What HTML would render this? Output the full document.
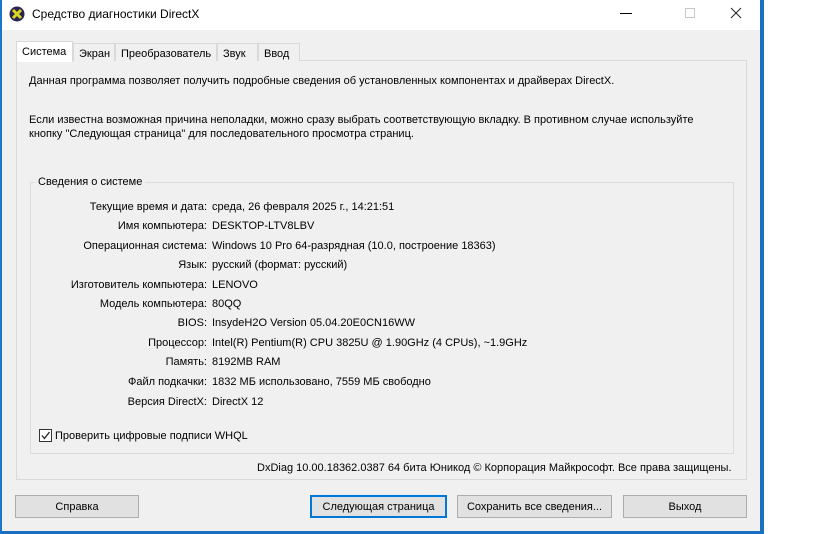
<!DOCTYPE html>
<html><head><meta charset="utf-8"><style>
*{margin:0;padding:0;box-sizing:border-box}
body{width:819px;height:534px;background:#fff;position:relative;overflow:hidden;font-family:"Liberation Sans",sans-serif;font-size:11px;color:#000}
.a{position:absolute}
.win{left:0;top:0;width:764px;height:534px;background:#f0f0f0;border-left:2px solid #1a78c8;border-right:4px solid #1a6fc0;border-bottom:3px solid #1a6fc0}
.title{left:2px;top:0;width:758px;height:30px;background:#fff}
.tab{top:43px;height:18px;border:1px solid #d9d9d9;border-bottom:none;background:#f0f0f0;padding:4px 5px 0;font-size:11px}
.panel{left:16px;top:60px;width:731px;height:420px;border:1px solid #d9d9d9;background:#f0f0f0}
.grp{left:30px;top:182px;width:704px;height:272px;border:1px solid #dcdcdc}
.lbl{width:207px;text-align:right;left:0}
.val{left:212px}
.btn{top:495px;height:23px;border:1px solid #adadad;background:#e1e1e1;text-align:center;line-height:22px}
</style></head><body>
<div class="a win"></div>
<div class="a title"></div>
<svg class="a" style="left:9px;top:6px" width="16" height="16" viewBox="0 0 16 16"><circle cx="8" cy="8" r="7.5" fill="#2a2550"/><path d="M4 4L12 12M12 4L4 12" stroke="#d8d820" stroke-width="3"/></svg>
<div class="a" style="left:32px;top:7px;font-size:12px">Средство диагностики DirectX</div>
<div class="a" style="left:620px;top:13px;width:12px;height:1px;background:#000"></div>
<div class="a" style="left:685px;top:8px;width:10px;height:10px;border:1px solid #c8c8c8"></div>
<svg class="a" style="left:730px;top:7px" width="12" height="12"><path d="M1 1L11 11M11 1L1 11" stroke="#222" stroke-width="1"/></svg>
<div class="a panel"></div>
<div class="a tab" style="left:16px;top:41px;height:21px;background:#fff;width:57px;padding-top:4px">Система</div>
<div class="a tab" style="left:73px;width:42px">Экран</div>
<div class="a tab" style="left:115px;width:102px">Преобразователь</div>
<div class="a tab" style="left:217px;width:41px">Звук</div>
<div class="a tab" style="left:258px;width:42px">Ввод</div>
<div class="a" style="left:29px;top:75px">Данная программа позволяет получить подробные сведения об установленных компонентах и драйверах DirectX.</div>
<div class="a" style="left:29px;top:113px;line-height:14px">Если известна возможная причина неполадки, можно сразу выбрать соответствующую вкладку. В противном случае используйте<br>кнопку "Следующая страница" для последовательного просмотра страниц.</div>
<div class="a grp"></div>
<div class="a" style="left:35px;top:176px;background:#f0f0f0;padding:0 3px">Сведения о системе</div>
<div class="a lbl" style="top:201px">Текущие время и дата:</div><div class="a val" style="top:201px">среда, 26 февраля 2025 г., 14:21:51</div>
<div class="a lbl" style="top:220px">Имя компьютера:</div><div class="a val" style="top:220px">DESKTOP-LTV8LBV</div>
<div class="a lbl" style="top:240px">Операционная система:</div><div class="a val" style="top:240px">Windows 10 Pro 64-разрядная (10.0, построение 18363)</div>
<div class="a lbl" style="top:259px">Язык:</div><div class="a val" style="top:259px">русский (формат: русский)</div>
<div class="a lbl" style="top:279px">Изготовитель компьютера:</div><div class="a val" style="top:279px">LENOVO</div>
<div class="a lbl" style="top:298px">Модель компьютера:</div><div class="a val" style="top:298px">80QQ</div>
<div class="a lbl" style="top:317px">BIOS:</div><div class="a val" style="top:317px">InsydeH2O Version 05.04.20E0CN16WW</div>
<div class="a lbl" style="top:337px">Процессор:</div><div class="a val" style="top:337px">Intel(R) Pentium(R) CPU 3825U @ 1.90GHz (4 CPUs), ~1.9GHz</div>
<div class="a lbl" style="top:356px">Память:</div><div class="a val" style="top:356px">8192MB RAM</div>
<div class="a lbl" style="top:376px">Файл подкачки:</div><div class="a val" style="top:376px">1832 МБ использовано, 7559 МБ свободно</div>
<div class="a lbl" style="top:396px">Версия DirectX:</div><div class="a val" style="top:396px">DirectX 12</div>
<div class="a" style="left:39px;top:429px;width:13px;height:13px;border:1px solid #333;background:#fff"></div>
<svg class="a" style="left:40px;top:430px" width="11" height="11"><path d="M2 5.5L4.5 8.5L9.5 2" stroke="#222" stroke-width="1.3" fill="none"/></svg>
<div class="a" style="left:55px;top:430px">Проверить цифровые подписи WHQL</div>
<div class="a" style="left:257px;top:462px">DxDiag 10.00.18362.0387 64 бита Юникод © Корпорация Майкрософт. Все права защищены.</div>
<div class="a btn" style="left:15px;width:124px">Справка</div>
<div class="a btn" style="left:310px;width:137px;border:2px solid #0078d7;line-height:20px">Следующая страница</div>
<div class="a btn" style="left:457px;width:155px">Сохранить все сведения...</div>
<div class="a btn" style="left:623px;width:124px">Выход</div>
</body></html>
